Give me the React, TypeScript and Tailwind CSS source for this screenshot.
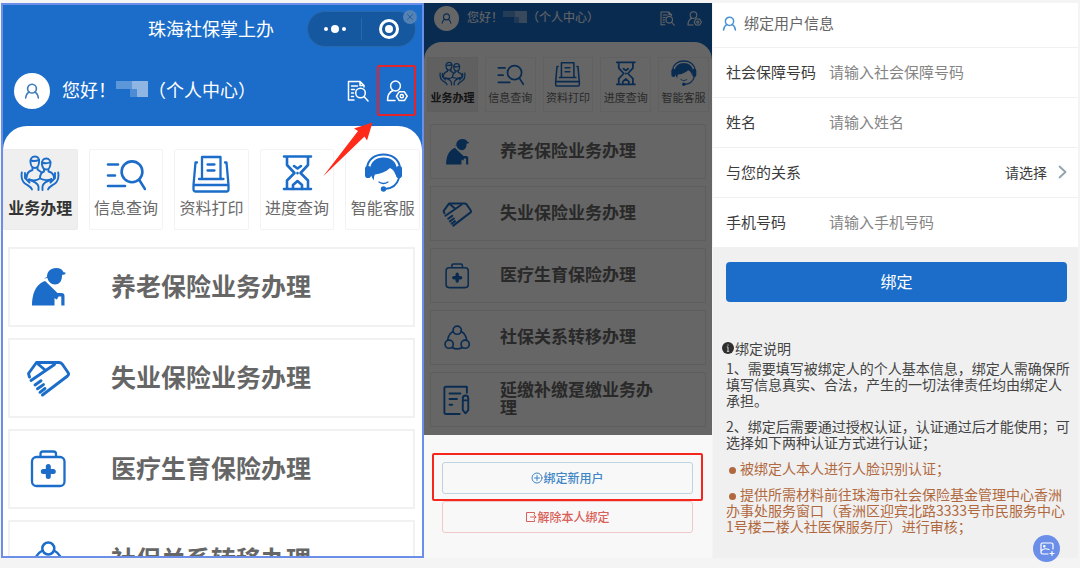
import type { ReactNode } from "react";

type IconProps = { className?: string };

const line = {
  fill: "none",
  stroke: "currentColor",
  strokeLinecap: "round",
  strokeLinejoin: "round",
} as const;

function PersonIcon({ className }: IconProps) {
  return (
    <svg viewBox="0 0 24 24" className={className} {...line} strokeWidth={2.4} aria-hidden="true">
      <circle cx="12" cy="8.5" r="6.6" />
      <path d="M2.5 22.5c.5-4.500 2.500-7.500 5.500-9M21.500 22.500c-.5-4.500-2.500-7.500-5.500-9" />
    </svg>
  );
}

function RecordSearchIcon({ className }: IconProps) {
  return (
    <svg viewBox="0 0 22 22" className={className} {...line} strokeWidth={1.5} aria-hidden="true">
      <path d="M7 20H1.500V1.500H13l4 4V7M13 1.500V5.500h4M4.500 6h6M4.500 9.500h3M4.500 13h2M4.500 16.500h2" />
      <circle cx="13.500" cy="13" r="4.800" />
      <path d="M17 16.500l4 4.500" />
    </svg>
  );
}

function PersonSettingsIcon({ className }: IconProps) {
  return (
    <svg viewBox="0 0 22 22" className={className} {...line} strokeWidth={1.5} aria-hidden="true">
      <circle cx="9.500" cy="6" r="4.900" />
      <path d="M7 10.500C3.500 12 1.500 15.500 1.500 20.500h7.500" />
      <path d="M13.200 11.800h5.200l2.800 4.400-2.800 4.400h-5.200l-2.800-4.400z" />
      <circle cx="15.800" cy="16.200" r="1.600" />
    </svg>
  );
}

function HandsIcon({ className }: IconProps) {
  return (
    <svg viewBox="0 0 40 40" className={className} {...line} strokeWidth={1.9} aria-hidden="true">
      <path d="M10.500 9.500C10 5.500 12 3.500 15 3.500s4.500 2 4 6c-.3 3-2 5.500-4.200 5.500s-4-2.500-4.300-5.500z" />
      <path d="M11 7.500c2.500.8 5.500.5 8-.7" />
      <path d="M22 11.500c-.5-4 1.500-6 4.200-6s4.700 2 4.200 6c-.4 3-2 5-4.200 5s-3.800-2-4.200-5z" />
      <path d="M22 9.500c2.500 1 6 1 8.500-.5" />
      <path d="M12.500 14.500v2.500c-4 1-6 3-6 8M17.500 14.500v2l3.500 2.500M24 16.500v2c-3 1-4 3-4 7M28.500 16.500v2c4 1 5.500 3 5.500 6.500M9 26.500c4 1.500 8 1 11-1M20 25.500c4 2 8 2 11.500.5" />
      <path d="M1.800 19.500c-.8 5 .2 8.500 3.200 11 3 2.200 5.500 2.500 7 6M5 20v5l4.500 4.500M9 26.500c4.500 1.500 8.500 3 9.500 7v3.500M38.200 19.500c.8 5-.2 8.500-3.200 11-3 2.200-5.500 2.500-7 6M35 20v5l-4.500 4.500M31.500 26.500c-4.500 1.500-8.500 3-9 7v3.500" />
    </svg>
  );
}

function ListSearchIcon({ className }: IconProps) {
  return (
    <svg viewBox="0 0 40 40" className={className} {...line} strokeWidth={2.6} aria-hidden="true">
      <path d="M2 11.500h10M2 22.500h7M2 33h17M33 26.500l6 9.500" />
      <circle cx="26" cy="18.800" r="10.400" />
    </svg>
  );
}

function PrintIcon({ className }: IconProps) {
  return (
    <svg viewBox="0 0 40 40" className={className} {...line} strokeWidth={2.300} aria-hidden="true">
      <path d="M6 9.500H4.500L2.500 32M34 9.500h1.500L37.500 32M2.500 32h35v4.500a2 2 0 0 1-2 2h-31a2 2 0 0 1-2-2z" />
      <path d="M11 26V4h18.500v22M8 26h24.500M16.500 11.500h7M16.500 17.500h7" />
    </svg>
  );
}

function HourglassIcon({ className }: IconProps) {
  return (
    <svg viewBox="0 0 40 40" className={className} {...line} strokeWidth={2.600} aria-hidden="true">
      <path d="M7 3.500h27M7 36h27M10 3.500v8.500l7.500 8L10 27.500V36M31 3.500v8.500l-7.500 8 7.500 7.500V36" />
      <path d="M17 13l3.500 2.500L24 13M20.500 20v.2M16 36v-4l4.500-4 4.500 4v4" />
    </svg>
  );
}

function ServiceIcon({ className }: IconProps) {
  return (
    <svg viewBox="0 0 40 40" className={className} aria-hidden="true">
      <path d="M4 15C5 6 12 1.500 20.500 1.500S36 6 37 15" {...line} strokeWidth={1.900} />
      <path d="M7 17C7 9 13 4.500 20.500 4.500S34 9 34 17c-.5 2-1 3-1.500 5.500-.8-4-2.500-6-5.500-7.500-4.500 4-9.500 6-15 6.500-1 1.500-1.200 3-1 6C8.500 24 7 21 7 17z" fill="currentColor" />
      <rect x="2" y="13" width="6" height="12" rx="2.800" fill="currentColor" />
      <rect x="33" y="13" width="6" height="12" rx="2.800" fill="currentColor" />
      <path d="M36 25c-2 7-7 10.500-14 11" {...line} strokeWidth={1.900} />
      <path d="M16 29c3 2 6 2 9 0" {...line} strokeWidth={1.300} />
      <circle cx="20.500" cy="36" r="2.700" fill="currentColor" />
    </svg>
  );
}

function ElderIcon({ className }: IconProps) {
  return (
    <svg viewBox="0 0 44 44" className={className} fill="currentColor" aria-hidden="true">
      <path d="M21 12c0-5.500 3.500-9 9-9 4 0 6.500 1.500 7.500 4.200l2 .3-.3 1.800-3.200.7c.3 5-2 9.500-7 9.500-4 0-7-3-7.500-6.500l-3.500.5z" />
      <path d="M6 40.500C6 30 9 20.500 17.500 16.500c1.500-.7 2.500 0 3.200 1L31.500 28h4c2 0 3 1.200 3 3v9.500h-3.200V31.500h-2.800l-1.500 3c-1-.2-1.700-.8-2.500-1.500v7.500z" />
    </svg>
  );
}

function HandshakeIcon({ className }: IconProps) {
  return (
    <svg viewBox="0 0 44 44" className={className} {...line} strokeWidth={2.900} aria-hidden="true">
      <path d="M3.500 21L2.500 17.500 10.500 6.500H33c1.500 0 2.200.3 3 1.300L42 16.500c.8 1.300.7 2.500-.5 3.500L16.500 39" />
      <path d="M5 24.500L28.500 8.500M12 8l6.500 5.500M9 29l6-4.200M11.500 32.800l6-4.200M14 36.300l5-3.800" />
    </svg>
  );
}

function MedicalIcon({ className }: IconProps) {
  return (
    <svg viewBox="0 0 44 44" className={className} {...line} strokeWidth={2.300} aria-hidden="true">
      <rect x="6" y="10" width="32.500" height="29" rx="4.500" />
      <path d="M14.500 9V7a2.500 2.500 0 0 1 2.500-2.500h10.500A2.500 2.500 0 0 1 30 7v2" />
      <path d="M22.300 19.500v10M17.300 24.500h10" strokeWidth={5} />
    </svg>
  );
}

function TransferIcon({ className }: IconProps) {
  return (
    <svg viewBox="0 0 44 44" className={className} {...line} strokeWidth={2.500} aria-hidden="true">
      <circle cx="22.300" cy="10.500" r="6" />
      <circle cx="10.500" cy="31" r="6" />
      <circle cx="34" cy="31" r="6" />
      <path d="M16.500 12.500C11.500 15 9 19 8.500 25M28 12.500c5 2.500 7.500 6.500 8 12.500M15.500 36.500c4.500 2 9 2 13.500 0" />
    </svg>
  );
}

function PaymentIcon({ className }: IconProps) {
  return (
    <svg viewBox="0 0 44 44" className={className} {...line} strokeWidth={2.800} aria-hidden="true">
      <path d="M26 42.500H5.500a2 2 0 0 1-2-2V4.500a2 2 0 0 1 2-2h31v9" />
      <path d="M11 12.500h16M11 20.500h11M11 29h4M34.500 15.500c2.500 0 4 1.500 4 4V37l-4 4.500-4-4.500V19.500c0-2.500 1.500-4 4-4zM30.500 22.500h8" />
    </svg>
  );
}

const tabs: { label: string; Icon: (p: IconProps) => ReactNode }[] = [
  { label: "业务办理", Icon: HandsIcon },
  { label: "信息查询", Icon: ListSearchIcon },
  { label: "资料打印", Icon: PrintIcon },
  { label: "进度查询", Icon: HourglassIcon },
  { label: "智能客服", Icon: ServiceIcon },
];

const services: { label: string; Icon: (p: IconProps) => ReactNode }[] = [
  { label: "养老保险业务办理", Icon: ElderIcon },
  { label: "失业保险业务办理", Icon: HandshakeIcon },
  { label: "医疗生育保险办理", Icon: MedicalIcon },
  { label: "社保关系转移办理", Icon: TransferIcon },
  { label: "延缴补缴趸缴业务办理", Icon: PaymentIcon },
];

function MaskedName({ compact }: { compact?: boolean }) {
  return (
    <span className={compact ? "flex h-[12px] w-[24px] flex-col" : "flex h-[16px] w-[32px] flex-col"}>
      <span className="flex flex-1">
        <span className="flex-1 bg-[#5c97d9]" />
        <span className="w-1/2 bg-[#8fb6e3]" />
      </span>
      <span className="flex flex-1">
        <span className="w-[45%]" />
        <span className="w-[20%] bg-[#4c8cd5]" />
        <span className="flex-1 bg-[#8fb6e3]" />
      </span>
    </span>
  );
}

function Greeting({ compact }: { compact?: boolean }) {
  return (
    <div className={compact ? "flex items-center pt-[3px] pr-[10px] pb-[11px] pl-[10px]" : "mt-[12px] mb-[10px] flex items-center pr-[6px] pl-[11px]"}>
      <span className={compact ? "flex size-[25px] items-center justify-center rounded-full bg-white text-[#1b6dc9]" : "flex size-[36px] items-center justify-center rounded-full bg-white text-[#3d79bd]"}>
        <PersonIcon className={compact ? "size-[11px]" : "size-[16px]"} />
      </span>
      <span className={compact ? "ml-[8px] flex items-center pb-[4px] text-[12px] leading-[18px]" : "ml-[12px] flex items-center pb-[4px] text-[18px] leading-[26px]"}>
        您好！
        <MaskedName compact={compact} />
        （个人中心）
      </span>
      <button type="button" aria-label="办理记录" className="ml-auto">
        <RecordSearchIcon className={compact ? "size-[15px]" : "size-[22px]"} />
      </button>
      <button
        type="button"
        aria-label="用户绑定"
        className={compact ? "ml-[12px]" : "ml-[8px] flex h-[51px] w-[39px] items-center justify-center rounded-[2px] border-2 border-[#e3242b]"}
      >
        <PersonSettingsIcon className={compact ? "size-[15px]" : "size-[22px]"} />
      </button>
    </div>
  );
}

function Home({ compact }: { compact?: boolean }) {
  return (
    <div className={compact ? "rounded-t-[18px] bg-white pt-[15px]" : "rounded-t-[24px] bg-white pt-[23px]"}>
      <nav className={compact ? "grid grid-cols-5 gap-[7px] px-[3px]" : "grid grid-cols-5 gap-[11px] pr-[2px]"}>
        {tabs.map(({ label, Icon }, i) => (
          <button
            key={label}
            type="button"
            className={[
              "flex flex-col items-center border whitespace-nowrap",
              compact ? "h-[55px] pt-[2px] text-[11px] leading-[16px]" : "h-[81px] rounded-[2px] pt-[3px] text-[16px] leading-[24px]",
              i === 0 ? "border-[#ebebeb] bg-[#efefef] font-bold text-[#333]" : "border-[#f3f3f3] font-normal text-[#6a6a6a]",
            ].join(" ")}
          >
            <Icon className={compact ? "size-[27px] text-[#1b6dc9]" : "size-[40px] text-[#1b6dc9]"} />
            <span className="mt-[2px]">{label}</span>
          </button>
        ))}
      </nav>
      <ul className={compact ? "mt-[12px] flex flex-col gap-[7px] px-[6px] pb-[8px]" : "mt-[17px] flex flex-col gap-[11px] pr-[7px] pl-[5px]"}>
        {services.map(({ label, Icon }) => (
          <li key={label}>
            <button
              type="button"
              className={
                compact
                  ? "flex h-[55px] w-full items-center border border-[#ececec] pr-[40px] pl-[11px] text-left text-[17px] leading-[18px] font-bold text-[#666]"
                  : "flex h-[80px] w-full items-center border-2 border-[#f1f1f1] pr-[40px] pl-[16px] text-left text-[25px] leading-[30px] font-bold text-[#666]"
              }
            >
              <Icon className={compact ? "size-[30px] shrink-0 text-[#1b6dc9]" : "size-[44px] shrink-0 text-[#1b6dc9]"} />
              <span className={compact ? "ml-[28px] pb-[4px]" : "ml-[41px] pb-[4px]"}>{label}</span>
            </button>
          </li>
        ))}
      </ul>
    </div>
  );
}

function HomePanel() {
  return (
    <section className="relative min-h-0 min-w-0 overflow-hidden border-2 border-[#6b8fe8] bg-[#1b6dc9] text-white">
      <header className="grid h-[48px] grid-cols-[1fr_auto_1fr] items-center pr-[6px]">
        <h1 className="col-start-2 ml-[3px] pb-[2px] text-[18px] leading-[26px]">珠海社保掌上办</h1>
        <div className="relative flex h-[36px] w-[109px] items-center justify-self-end rounded-full border border-[#2a68ae] bg-[#15589f]">
          <button type="button" aria-label="更多" className="flex flex-1 items-center justify-center gap-[3px]">
            <span className="size-[4px] rounded-full bg-white" />
            <span className="size-[8px] rounded-full bg-white" />
            <span className="size-[4px] rounded-full bg-white" />
          </button>
          <span className="h-[22px] w-px bg-[#2a68ae]" />
          <button type="button" aria-label="退出" className="flex flex-1 justify-center">
            <span className="flex size-[20px] items-center justify-center rounded-full border-3 border-white">
              <span className="size-[8px] rounded-full bg-white" />
            </span>
          </button>
          <button type="button" aria-label="关闭" className="absolute -top-[2px] -right-[2px] flex size-[14px] items-center justify-center rounded-full bg-[#5482b5] text-[#2c5f99]">
            <svg viewBox="0 0 8 8" className="size-[8px]" {...line} aria-hidden="true">
              <path d="M1.500 1.500l5 5M6.500 1.500l-5 5" />
            </svg>
          </button>
        </div>
      </header>
      <Greeting />
      <Home />
      <svg viewBox="0 0 52 56" className="absolute top-[117px] right-[48px] h-[56px] w-[52px]" aria-hidden="true">
        <path d="M1 54.500L36 9l-4-2.500L50.500.500 45 18.500l-2.500-4z" fill="#ff2a1a" />
      </svg>
    </section>
  );
}

function ActionPanel() {
  return (
    <section className="flex min-h-0 min-w-0 flex-col bg-[#f8f8f8]">
      <div className="relative min-h-0 flex-1 overflow-hidden bg-[#1b6dc9] text-white">
        <Greeting compact />
        <Home compact />
        <div className="absolute inset-0 bg-black/60" />
      </div>
      <div className="shrink-0 pt-[18px] pr-[9px] pb-[25px] pl-[8px] text-[12px] leading-[18px] font-medium">
        <div className="rounded-[2px] border-2 border-[#f5271d] px-[8px] pt-[7px] pb-[5px]">
          <button type="button" className="flex h-[32px] w-full items-center justify-center rounded-[3px] border border-[#bcd3e2] text-[#3f86c6]">
            <svg viewBox="0 0 12 12" className="size-[12px]" {...line} aria-hidden="true">
              <circle cx="6" cy="6" r="5" />
              <path d="M6 3.500v5M3.500 6h5" />
            </svg>
            绑定新用户
          </button>
        </div>
        <div className="px-[10px]">
          <button type="button" className="flex h-[32px] w-full items-center justify-center rounded-[3px] border border-[#efc9c7] text-[#d9605a]">
            <svg viewBox="0 0 12 12" className="size-[12px]" {...line} aria-hidden="true">
              <path d="M9.500 3V1.500h-8v9h8V9M5.500 6h5.500M9 4l2 2-2 2" />
            </svg>
            解除本人绑定
          </button>
        </div>
      </div>
    </section>
  );
}

const rowClass = "flex h-[50px] items-center border-b border-[#f0f0f0] pb-[2px] pl-[13px]";
const labelClass = "w-[103px] shrink-0 text-[#3c3c3c]";

function TextRow({ id, label, hint }: { id: string; label: string; hint: string }) {
  return (
    <div className={rowClass}>
      <label htmlFor={id} className={labelClass}>{label}</label>
      <input id={id} type="text" placeholder={hint} className="min-w-0 flex-1 bg-transparent outline-none placeholder:text-[#858585]" />
    </div>
  );
}

function BindPanel() {
  return (
    <section className="ml-px min-h-0 min-w-0 overflow-hidden bg-[#f0f0f0]">
      <form className="text-[15px] leading-[22px]">
        <div className="bg-white">
          <h2 className="flex h-[45px] items-center gap-[7px] border-b border-[#f0f0f0] pb-[4px] pl-[9px] text-[#666]">
            <PersonIcon className="size-[15px] text-[#4a94d4]" />
            绑定用户信息
          </h2>
          <TextRow id="ssn" label="社会保障号码" hint="请输入社会保障号码" />
          <TextRow id="name" label="姓名" hint="请输入姓名" />
          <div className={rowClass}>
            <label htmlFor="relation" className={labelClass}>与您的关系</label>
            <select id="relation" className="ml-auto appearance-none bg-transparent text-[14px] text-[#3c3c3c] outline-none">
              <option>请选择</option>
            </select>
            <svg viewBox="0 0 9 14" className="mr-[11px] ml-[11px] h-[14px] w-[9px] text-[#8fa3ad]" {...line} strokeWidth={1.800} aria-hidden="true">
              <path d="M1.500 1.500L7.500 7l-6 5.500" />
            </svg>
          </div>
          <TextRow id="phone" label="手机号码" hint="请输入手机号码" />
        </div>
        <div className="pt-[14px] pr-[11px] pl-[13px]">
          <button type="button" className="h-[40px] w-full rounded-[4px] bg-[#1b6dc9] pb-[2px] text-[16px] text-white">绑定</button>
        </div>
      </form>
      <div className="mt-[37px] flex flex-col gap-[10px] pr-[7px] pl-[13px] text-[14px] leading-[16px] text-[#444]">
        <div>
          <h3 className="mb-[3px] -ml-[4px] flex items-center leading-[18px]">
            <svg viewBox="0 0 12 12" className="mr-px size-[12px]" aria-hidden="true">
              <circle cx="6" cy="6" r="6" fill="#2e2e2e" />
              <path d="M6 2.500v1.200M6 5v4.300M4.800 5H6M4.800 9.300h2.400" stroke="#cfcfcf" fill="none" />
            </svg>
            绑定说明
          </h3>
          <p>1、需要填写被绑定人的个人基本信息，绑定人需确保所填写信息真实、合法，产生的一切法律责任均由绑定人承担。</p>
        </div>
        <p>2、绑定后需要通过授权认证，认证通过后才能使用；可选择如下两种认证方式进行认证；</p>
        <p className="text-[#b0693f]">
          <span className="mr-[4px] ml-[3px] inline-block size-[7px] rounded-full bg-current align-middle" />
          被绑定人本人进行人脸识别认证；
        </p>
        <p className="text-[#b0693f]">
          <span className="mr-[4px] ml-[3px] inline-block size-[7px] rounded-full bg-current align-middle" />
          提供所需材料前往珠海市社会保险基金管理中心香洲办事处服务窗口（香洲区迎宾北路3333号市民服务中心1号楼二楼人社医保服务厅）进行审核；
        </p>
      </div>
    </section>
  );
}

export default function App() {
  return (
    <main
      lang="zh-CN"
      className="relative grid h-screen grid-cols-[423fr_288fr_366fr] grid-rows-[minmax(0,1fr)] bg-[#f4f4f4] pt-[3px] pr-[2px] pb-[10px] pl-px font-['Noto_Sans_CJK_SC',sans-serif]"
    >
      <HomePanel />
      <ActionPanel />
      <BindPanel />
      <button type="button" aria-label="添加图片" className="absolute right-[20px] bottom-[6px] flex size-[27px] items-center justify-center rounded-full bg-[#6b8fe8] text-white">
        <svg viewBox="0 0 16 16" className="size-[16px]" {...line} strokeWidth={1.200} aria-hidden="true">
          <path d="M14 8V3.500a1.500 1.500 0 0 0-1.500-1.500h-9A1.500 1.500 0 0 0 2 3.500v8A1.500 1.500 0 0 0 3.500 13H9M2 10c3-3 5-2.500 8-1.500M13 10.500v4M11 12.500h4" />
          <circle cx="5.300" cy="5.300" r=".7" />
        </svg>
      </button>
    </main>
  );
}
